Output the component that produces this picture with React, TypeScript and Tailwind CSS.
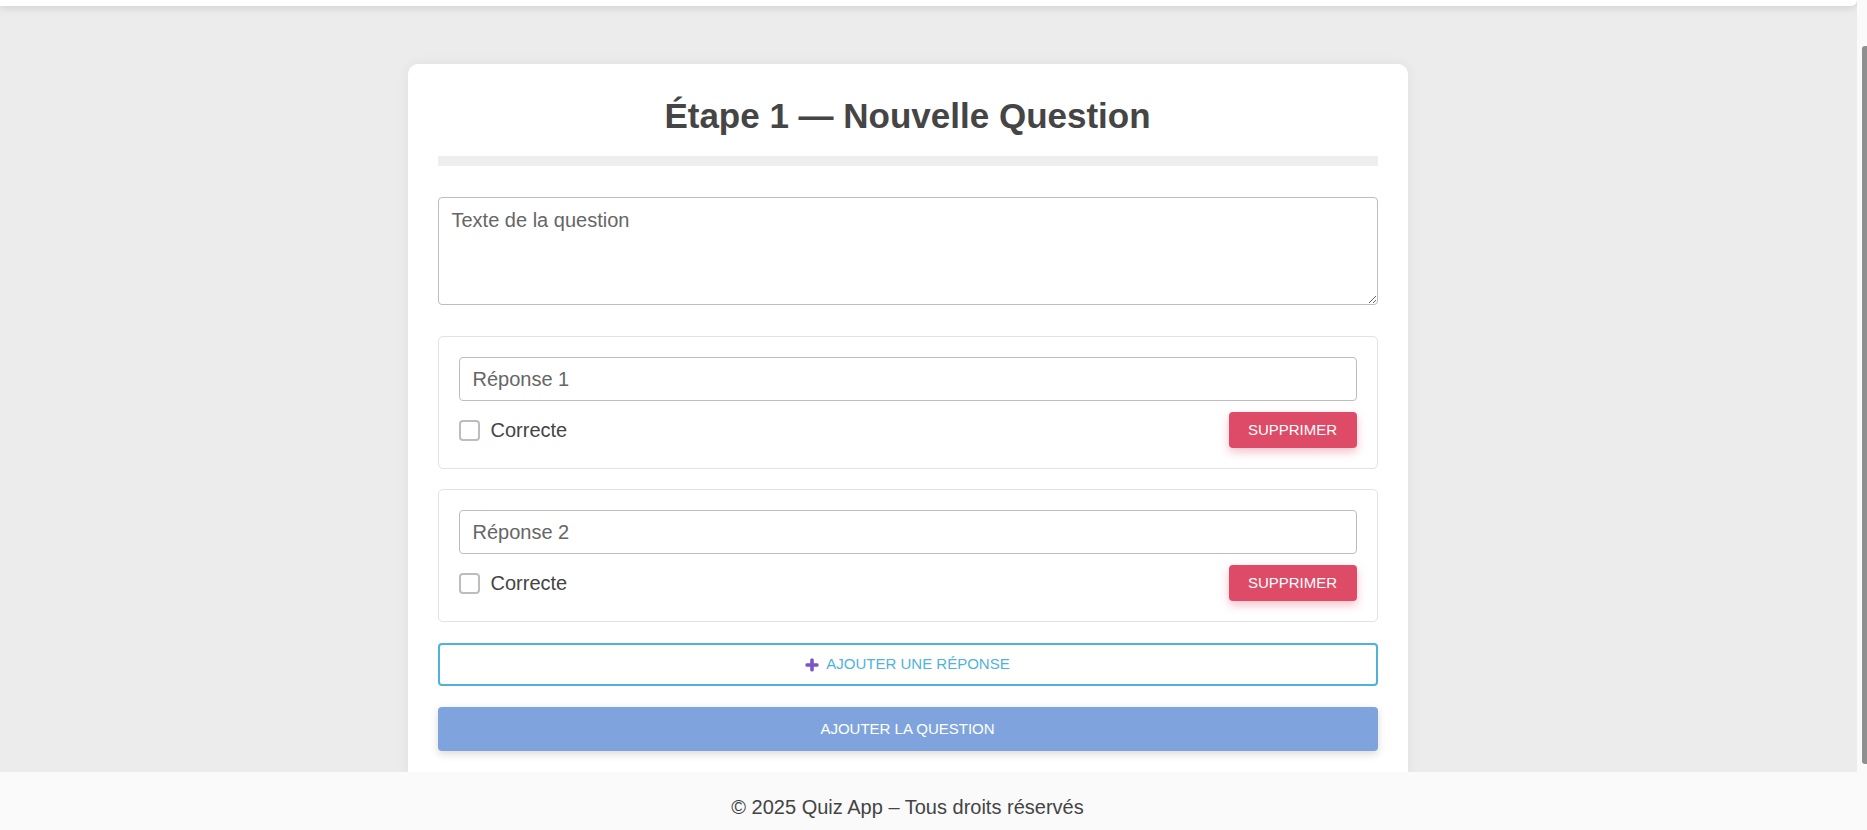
import { useLayoutEffect, useRef, useState } from "react";

type Answer = { id: number; text: string; correct: boolean };

function PlusIcon() {
  return (
    <svg width="14" height="14" viewBox="0 0 14 14" aria-hidden="true">
      <rect x="5.2" y="0.5" width="3.6" height="13" rx="1.4" fill="#7b55c8" />
      <rect x="0.5" y="5.2" width="13" height="3.6" rx="1.4" fill="#7b55c8" />
    </svg>
  );
}

function AnswerBox({
  answer,
  index,
  onToggle,
}: {
  answer: Answer;
  index: number;
  onToggle: () => void;
}) {
  return (
    <div className="border border-[#e2e2e2] rounded-[5px] p-[20px] bg-white">
      <input
        type="text"
        placeholder={"Réponse " + (index + 1)}
        defaultValue={answer.text}
        className="block w-full h-[44px] border border-[#bdbdbd] rounded-[4px] px-[13px] text-xl text-[#444] placeholder:text-[#666] outline-none"
      />
      <div className="mt-[11px] h-[36px] flex items-center justify-between">
        <label className="flex items-center gap-[11px] text-xl text-[#444] cursor-pointer">
          <input
            type="checkbox"
            checked={answer.correct}
            onChange={onToggle}
            className="appearance-none w-[21px] h-[21px] border-2 border-[#bdbdbd] rounded-[4px] bg-white checked:bg-[#7fa4dd]"
          />
          Correcte
        </label>
        <button className="w-[128px] h-[36px] bg-[#de4b67] text-white text-[15px] rounded-[4px] shadow-[0_4px_10px_rgba(222,75,103,0.35)]">
          SUPPRIMER
        </button>
      </div>
    </div>
  );
}

export default function App() {
  const scrollRef = useRef<HTMLDivElement>(null);
  const [thumb, setThumb] = useState({ top: 40, height: 728 });
  const [answers, setAnswers] = useState<Answer[]>([
    { id: 1, text: "", correct: false },
    { id: 2, text: "", correct: false },
  ]);

  const syncThumb = () => {
    const el = scrollRef.current;
    if (!el) return;
    const track = el.clientHeight;
    const height = Math.round((track * el.clientHeight) / el.scrollHeight);
    const top = Math.round((el.scrollTop / el.scrollHeight) * track);
    setThumb({ top, height });
  };

  useLayoutEffect(() => {
    const el = scrollRef.current;
    // page is scrolled almost to the end, card bottom sits just under the footer
    if (el) el.scrollTop = el.scrollHeight - el.clientHeight - 9;
    syncThumb();
  }, []);

  const toggle = (id: number) => {
    setAnswers(answers.map((a) => (a.id === id ? { ...a, correct: !a.correct } : a)));
  };

  return (
    <div className="h-[830px] flex flex-col bg-[#ececec] font-['Liberation_Sans',Arial,sans-serif] overflow-hidden">
      <div className="h-[772px] shrink-0 flex">
        <div ref={scrollRef} onScroll={syncThumb} className="flex-1 min-w-0 overflow-y-auto [scrollbar-width:none]">
          <header className="h-[55px] bg-white rounded-br-[6px] shadow-[0_2px_8px_rgba(0,0,0,0.12)]"></header>
          <main className="pt-[58px] pr-[42px] flex justify-center">
            <div className="w-[1000px] bg-white rounded-[10px] shadow-[0_0_14px_rgba(0,0,0,0.06)] px-[30px] pt-[30px] pb-[30px]">
              <h1 className="pt-[2px] text-[35px] leading-[40px] font-bold text-center text-[#454545]">
                Étape 1 — Nouvelle Question
              </h1>
              <div className="mt-[20px] h-[10px] bg-[#eeeeee]"></div>
              <textarea
                placeholder="Texte de la question"
                className="block mt-[31px] w-full h-[108px] border border-[#bdbdbd] rounded-[4px] px-[13px] pt-[8px] text-xl leading-[28px] text-[#444] placeholder:text-[#666] outline-none resize-y"
              />
              <div className="mt-[31px] flex flex-col gap-[20px]">
                {answers.map((a, i) => (
                  <AnswerBox key={a.id} answer={a} index={i} onToggle={() => toggle(a.id)} />
                ))}
              </div>
              <button className="mt-[21px] w-full h-[43px] border-2 border-[#4fb2d8] rounded-[4px] flex items-center justify-center gap-[7px] text-[15px] text-[#4fb3dc] bg-white">
                <PlusIcon />
                AJOUTER UNE RÉPONSE
              </button>
              <button className="block mt-[21px] w-full h-[44px] bg-[#7fa4dd] text-white text-[15px] rounded-[4px] shadow-[0_3px_8px_rgba(0,0,0,0.15)]">
                AJOUTER LA QUESTION
              </button>
            </div>
          </main>
        </div>
        <div className="w-[10px] shrink-0 bg-[#fafafa]">
          <div
            className="ml-[5px] w-[5px] bg-[#8f8f8f] rounded-l-[3px]"
            style={{ marginTop: thumb.top, height: thumb.height }}
          ></div>
        </div>
      </div>
      <footer className="h-[58px] shrink-0 bg-[#fafafa] pt-[21px] pr-[52px] text-center text-xl leading-[28px] text-[#444]">
        © 2025 Quiz App – Tous droits réservés
      </footer>
    </div>
  );
}
